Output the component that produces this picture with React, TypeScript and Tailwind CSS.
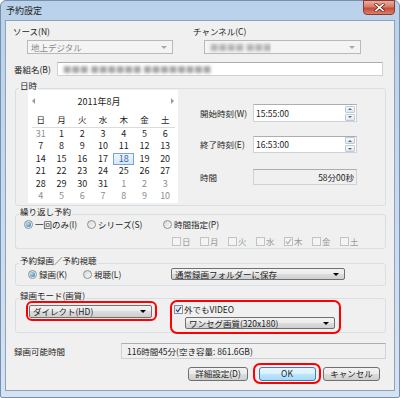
import React from 'react';

type Cell = { d: number; dim?: boolean; sel?: boolean };

const dayNames = ['日', '月', '火', '水', '木', '金', '土'];

const cells: Cell[] = [
  { d: 31, dim: true },
  ...Array.from({ length: 31 }, (_, i) => ({ d: i + 1, sel: i + 1 === 18 })),
  ...Array.from({ length: 10 }, (_, i) => ({ d: i + 1, dim: true })),
];

function DownArrow({ gray }: { gray?: boolean }) {
  return (
    <span
      className={`h-0 w-0 border-x-[3px] border-t-[3px] border-x-transparent ${gray ? 'border-t-[#a8a8a8]' : 'border-t-black'}`}
    />
  );
}

function Combo({ children, className = '' }: { children: React.ReactNode; className?: string }) {
  return (
    <div
      className={`flex items-center justify-between rounded-[2px] border border-[#707070] bg-[linear-gradient(#f2f2f2,#ebebeb_50%,#dddddd_50%,#cfcfcf)] pl-[3px] pr-[5px] ${className}`}
    >
      <span className="truncate">{children}</span>
      <DownArrow />
    </div>
  );
}

function DisabledCombo({ children, className = '' }: { children: React.ReactNode; className?: string }) {
  return (
    <div
      className={`flex h-[14px] items-center justify-between border border-[#b6babd] bg-[#f4f4f4] pl-[3px] pr-[5px] text-[#8a8a8a] ${className}`}
    >
      <span className="truncate">{children}</span>
      <DownArrow gray />
    </div>
  );
}

function Radio({ on, children }: { on?: boolean; children: React.ReactNode }) {
  return (
    <span className="flex items-center gap-[2px]">
      <span className="flex h-[9px] w-[9px] items-center justify-center rounded-full border border-[#8e8f8f] bg-linear-to-br from-[#d6d6d6] to-[#fcfcfc]">
        {on && (
          <span className="h-[5px] w-[5px] rounded-full bg-[radial-gradient(circle_at_35%_35%,#b5e6fd,#1d63a6)]" />
        )}
      </span>
      <span>{children}</span>
    </span>
  );
}

function CheckBox({ on, disabled, children }: { on?: boolean; disabled?: boolean; children: React.ReactNode }) {
  return (
    <span className={`flex items-center gap-[1px] ${disabled ? 'text-[#9a9a9a]' : ''}`}>
      <span
        className={`flex h-[9px] w-[9px] items-center justify-center border ${
          disabled ? 'border-[#c3c3c3] bg-[#f4f4f4]' : 'border-[#8e8f8f] bg-linear-to-br from-[#dcdcdc] to-white'
        }`}
      >
        {on && (
          <svg width="7" height="7" viewBox="0 0 7 7">
            <path
              d="M1 3.6 L2.8 5.6 L6 1"
              fill="none"
              stroke={disabled ? '#b4b4b4' : '#2b4c9b'}
              strokeWidth="1.3"
            />
          </svg>
        )}
      </span>
      <span>{children}</span>
    </span>
  );
}

function SpinBtn({ up }: { up?: boolean }) {
  return (
    <span className="flex h-[7px] w-[10px] items-center justify-center rounded-[1px] border border-[#c2c8d0] bg-linear-to-b from-[#f8fafc] to-[#dfe6ee]">
      <span
        className={`h-0 w-0 border-x-[2px] border-x-transparent ${
          up ? 'border-b-[2px] border-b-[#4a6a94]' : 'border-t-[2px] border-t-[#4a6a94]'
        }`}
      />
    </span>
  );
}

function TimeBox({ value }: { value: string }) {
  return (
    <div className="flex h-full w-[104px] items-center justify-between border border-[#cdd2d8] border-t-[#abadb3] bg-white pl-[2px] pr-[1px]">
      <span>{value}</span>
      <span className="flex flex-col gap-[1px]">
        <SpinBtn up />
        <SpinBtn />
      </span>
    </div>
  );
}

function Group({ title, className = '', children }: { title: string; className?: string; children: React.ReactNode }) {
  return (
    <div className={`ml-[9px] mr-[8px] rounded-[3px] border border-[#d5dfe5] ${className}`}>
      <div className="-mt-[9px] ml-[3px] w-fit bg-[#f0f0f0] px-[1px] leading-[11px]">{title}</div>
      {children}
    </div>
  );
}

function Button({ children, primary, className = '' }: { children: React.ReactNode; primary?: boolean; className?: string }) {
  return (
    <div
      className={`flex h-[14px] items-center justify-center rounded-[3px] border ${
        primary
          ? 'border-[#3c7fb1] bg-[linear-gradient(#eaf6fd,#d9f0fc_50%,#bee6fd_50%,#a7d9f5)]'
          : 'border-[#707070] bg-[linear-gradient(#f2f2f2,#ebebeb_50%,#dddddd_50%,#cfcfcf)]'
      } ${className}`}
    >
      {children}
    </div>
  );
}

export default function App() {
  return (
    <div className="h-[398px] w-[400px] font-['Noto_Sans_CJK_JP','Noto_Sans',sans-serif] text-[8.5px] leading-[11px] text-[#1e1e1e]">
      <div className="flex h-full flex-col rounded-t-[6px] rounded-b-[2px] border border-[#7890ab] bg-linear-to-b from-[#b9d1ea] via-[#c7daef] to-[#d4e3f4] px-[4px] pb-[6px]">
        {/* title bar */}
        <div className="flex h-[19px] items-start justify-between">
          <span className="ml-[1px] mt-[4px] text-[9px] leading-[11px]">予約設定</span>
          <div className="-mt-px flex h-[15px] w-[32px] items-center justify-center rounded-b-[4px] border border-[#8a3a30] bg-[linear-gradient(#e9ad9f,#d77b69_45%,#c74a36_55%,#db8068)]">
            <svg width="11" height="9" viewBox="0 0 11 9">
              <path d="M2 1.5 L9 7.5 M9 1.5 L2 7.5" stroke="#6a2a20" strokeWidth="3" strokeLinecap="square" />
              <path d="M2 1.5 L9 7.5 M9 1.5 L2 7.5" stroke="#ffffff" strokeWidth="1.6" strokeLinecap="square" />
            </svg>
          </div>
        </div>

        {/* client area */}
        <div className="flex flex-1 flex-col border border-[#8fa2b8] bg-[#f0f0f0]">
          {/* source / channel */}
          <div className="flex pt-[5px]">
            <div className="w-[187px]">
              <div className="pl-[7px]">ソース(N)</div>
              <DisabledCombo className="ml-[21px] mt-[3px] w-[146px]">地上デジタル</DisabledCombo>
            </div>
            <div>
              <div>チャンネル(C)</div>
              <DisabledCombo className="ml-[11px] mt-[3px] w-[157px]">
                <span className="pl-[2px] text-[#b4b4b4] blur-[1.6px]">■■■■ ■■■</span>
              </DisabledCombo>
            </div>
          </div>

          {/* program name */}
          <div className="mt-[8px] flex h-[14px] items-center">
            <span className="w-[51px] pl-[8px]">番組名(B)</span>
            <div className="flex h-full w-[326px] items-center border border-[#cdd2d8] border-t-[#abadb3] bg-white pl-[5px]">
              <span className="text-[#a6a6a6] blur-[1.6px]">■■■ ■■■■■■ ■■■■■■■■</span>
            </div>
          </div>

          {/* date time */}
          <Group title="日時" className="mt-[12px] h-[118px]">
            <div className="-mt-px flex">
              <div className="ml-[12px] h-[113px] w-[150px] bg-white">
                <div className="flex h-[22px] items-center justify-between px-[4px]">
                  <span className="h-0 w-0 border-y-[3px] border-r-[3px] border-y-transparent border-r-[#9a9a9a]" />
                  <span className="pr-[8px] text-[9px]">2011年8月</span>
                  <span className="h-0 w-0 border-y-[3px] border-l-[3px] border-y-transparent border-l-[#9a9a9a]" />
                </div>
                <div className="mx-auto w-[145px]">
                  <div className="grid h-[15px] grid-cols-7 items-center text-center">
                    {dayNames.map((d) => (
                      <span key={d}>{d}</span>
                    ))}
                  </div>
                  <div className="mx-[1px] h-px bg-[#dcdcdc]" />
                  <div className="grid grid-cols-7 text-center text-[9px] leading-[12.4px]">
                    {cells.map((c, i) => (
                      <span
                        key={i}
                        className={
                          c.sel
                            ? 'border border-[#7da2ce] bg-linear-to-b from-[#eef5fd] to-[#d6e7fa] leading-[10.4px] text-[#3568ad]'
                            : c.dim
                              ? 'text-[#8d8d8d]'
                              : ''
                        }
                      >
                        {c.d}
                      </span>
                    ))}
                  </div>
                </div>
              </div>

              <div className="ml-[22px] flex flex-col pt-[14px]">
                <div className="flex h-[18px] items-center">
                  <span className="w-[53px]">開始時刻(W)</span>
                  <TimeBox value="15:55:00" />
                </div>
                <div className="mt-[14px] flex h-[17px] items-center">
                  <span className="w-[53px]">終了時刻(E)</span>
                  <TimeBox value="16:53:00" />
                </div>
                <div className="mt-[16px] flex h-[16px] items-center">
                  <span className="w-[53px]">時間</span>
                  <div className="flex h-full w-[104px] items-center justify-end border border-[#cdd2d8] border-t-[#abadb3] bg-[#f0f0f0] pr-[2px]">
                    58分00秒
                  </div>
                </div>
              </div>
            </div>
          </Group>

          {/* repeat */}
          <Group title="繰り返し予約" className="mt-[8px] h-[35px]">
            <div className="mt-[2px] flex h-[11px] items-center pl-[8px]">
              <span className="w-[63px]">
                <Radio on>一回のみ(I)</Radio>
              </span>
              <span className="w-[76px]">
                <Radio>シリーズ(S)</Radio>
              </span>
              <Radio>時間指定(P)</Radio>
            </div>
            <div className="mt-[6px] flex h-[11px] items-center pl-[156px]">
              {dayNames.map((d) => (
                <span key={d} className="w-[28px]">
                  <CheckBox disabled on={d === '木'}>
                    {d}
                  </CheckBox>
                </span>
              ))}
            </div>
          </Group>

          {/* record / watch */}
          <Group title="予約録画／予約視聴" className="mt-[14px] h-[23px]">
            <div className="mt-[2px] flex h-[12px] items-center pl-[12px]">
              <span className="w-[55px]">
                <Radio on>録画(K)</Radio>
              </span>
              <span className="w-[88px]">
                <Radio>視聴(L)</Radio>
              </span>
              <Combo className="h-[12px] w-[174px]">通常録画フォルダーに保存</Combo>
            </div>
          </Group>

          {/* record mode */}
          <Group title="録画モード(画質)" className="mt-[12px] h-[35px]">
            <div className="-mt-px flex items-start">
              <div className="ml-[10px] mt-[1px] flex h-[20px] w-[131px] items-center rounded-[6px] border-2 border-[#ff0000] pl-[1px]">
                <Combo className="h-[13px] w-[123px]">ダイレクト(HD)</Combo>
              </div>
              <div className="ml-[13px] flex h-[34px] w-[171px] flex-col rounded-[7px] border-2 border-[#ff0000] pl-[2px]">
                <div className="mt-[2px] flex h-[11px] items-center">
                  <CheckBox on>外でもVIDEO</CheckBox>
                </div>
                <Combo className="ml-[11px] mt-[2px] h-[12px] w-[150px]">ワンセグ画質(320x180)</Combo>
              </div>
            </div>
          </Group>

          {/* capacity */}
          <div className="mt-[10px] flex h-[16px] items-center">
            <span className="w-[115px] pl-[8px]">録画可能時間</span>
            <div className="flex h-full w-[265px] items-center border border-[#cdd2d8] border-t-[#abadb3] bg-[#f0f0f0] pl-[5px]">
              116時間45分(空き容量: 861.6GB)
            </div>
          </div>

          {/* buttons */}
          <div className="mt-[4px] flex h-[21px] items-center">
            <Button className="ml-[182px] w-[60px]">詳細設定(D)</Button>
            <div className="ml-[5px] flex h-[21px] w-[68px] items-center justify-center rounded-[7px] border-2 border-[#ff0000]">
              <Button primary className="w-[57px]">
                OK
              </Button>
            </div>
            <Button className="ml-[2px] w-[57px]">キャンセル</Button>
          </div>
        </div>
      </div>
    </div>
  );
}
